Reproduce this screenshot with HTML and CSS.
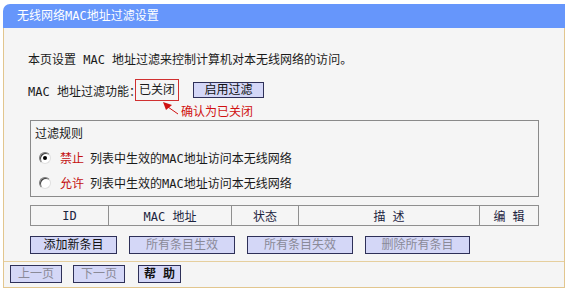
FILE: index.html
```html
<!DOCTYPE html>
<html lang="zh-CN">
<head>
    <meta charset="UTF-8">
    <title>无线网络MAC地址过滤设置</title>
    <link rel="stylesheet" href="styles.css">
</head>
<body>
    <div class="panel">
        <div class="title">无线网络MAC地址过滤设置</div>
        <div class="frame">
            <div class="content">
                <p class="intro">本页设置 MAC 地址过滤来控制计算机对本无线网络的访问。</p>

                <div class="status-row">
                    <span class="status-label">MAC 地址过滤功能：</span>
                    <span class="status-box">已关闭</span>
                    <button class="btn btn-enable">启用过滤</button>
                </div>
                <div class="note">
                    <svg class="note-arrow" width="20" height="16" viewBox="0 0 20 16">
                        <polygon points="2,1 11,4 5,9" fill="#d01010"/>
                        <line x1="7" y1="6" x2="17" y2="13" stroke="#d01010" stroke-width="1"/>
                    </svg>
                    <span>确认为已关闭</span>
                </div>

                <!-- filter rules -->
                <div class="rules">
                    <div class="rules-title">过滤规则</div>
                    <label class="rule">
                        <input type="radio" name="rule" checked>
                        <span class="red">禁止</span><span class="rule-text">列表中生效的MAC地址访问本无线网络</span>
                    </label>
                    <label class="rule">
                        <input type="radio" name="rule">
                        <span class="red">允许</span><span class="rule-text">列表中生效的MAC地址访问本无线网络</span>
                    </label>
                </div>

                <table class="list">
                    <tr>
                        <th class="c-id">ID</th>
                        <th class="c-mac">MAC 地址</th>
                        <th class="c-state">状态</th>
                        <th class="c-desc">描 述</th>
                        <th class="c-edit">编 辑</th>
                    </tr>
                </table>

                <div class="actions">
                    <button class="btn w-add">添加新条目</button>
                    <button class="btn w-all off">所有条目生效</button>
                    <button class="btn w-all off">所有条目失效</button>
                    <button class="btn w-del off">删除所有条目</button>
                </div>
            </div>

            <div class="footer">
                <button class="btn w-page off">上一页</button>
                <button class="btn w-page off">下一页</button>
                <button class="btn w-help">帮 助</button>
            </div>
        </div>
    </div>
</body>
</html>
```

FILE: styles.css
```css
body {
    margin: 0;
    padding: 4px 0 0 3px;
    background: #fff;
    font-family: "DejaVu Sans Mono", "Noto Sans CJK SC", monospace;
    font-size: 12px;
    color: #1a1a1a;
}
.panel {
    width: 562px;
}
.title {
    height: 24px;
    line-height: 24px;
    padding-left: 14px;
    background: #6696fb;
    color: #fff;
    border-radius: 7px 0 0 0;
}
.frame {
    height: 259px;
    background: #f5f5f5;
    border: 1px solid #e2c68e;
    border-top: none;
}
.content {
    padding: 22px 25px 0 26px;
}
.intro {
    margin: 0 0 0 -2px;
    line-height: 20px;
}
.status-row {
    display: flex;
    align-items: center;
    margin: 9px 0 0 -2px;
    height: 22px;
}
.status-box {
    height: 20px;
    line-height: 20px;
    padding: 0 3px;
    margin-left: -6px;
    border: 1px solid #d03030;
}
.btn {
    height: 18px;
    padding: 0;
    border: 1px solid #2e3058;
    background: #d4d7f7;
    font-family: inherit;
    font-size: 12px;
    color: #111;
    line-height: 16px;
}
.btn.off {
    color: #8a8a98;
}
.btn-enable {
    width: 71px;
    height: 16px;
    line-height: 14px;
    margin-left: 14px;
}
.note {
    display: flex;
    align-items: center;
    height: 19px;
    padding-left: 131px;
    color: #d01010;
}
.note-arrow {
    margin-top: -3px;
}
.red {
    color: #c41010;
}
.rules {
    box-sizing: border-box;
    height: 77px;
    padding-top: 3px;
    border: 1px solid #8a8a8a;
}
.rules-title {
    line-height: 21px;
    padding-left: 4px;
}
.rule {
    display: flex;
    align-items: center;
    height: 25px;
    padding-left: 8px;
}
.rule-text {
    margin-left: 6px;
}
.rule input {
    appearance: none;
    box-sizing: border-box;
    width: 12px;
    height: 12px;
    margin: 0 9px 0 0;
    border-radius: 50%;
    border: 1px solid;
    border-color: #7a7a7a #e0e0e0 #e0e0e0 #7a7a7a;
    background: #fff;
    box-shadow: inset 1px 1px 0 #404040;
    position: relative;
}
.rule input:checked::after {
    content: "";
    position: absolute;
    left: 3px;
    top: 3px;
    width: 4px;
    height: 4px;
    border-radius: 50%;
    background: #000;
}
.list {
    margin-top: 8px;
    width: 509px;
    border-collapse: collapse;
    table-layout: fixed;
}
.list th {
    height: 19px;
    padding: 0;
    border: 1px solid #8f8f8f;
    font-weight: normal;
    color: #1c2440;
    text-align: center;
}
.c-id { width: 77px; }
.c-mac { width: 122px; }
.c-state { width: 66px; }
.c-desc { width: 180px; }
.actions {
    display: flex;
    margin-top: 10px;
    gap: 12px;
}
.w-add { width: 87px; }
.w-all { width: 106px; }
.w-del { width: 105px; }
.footer {
    margin-top: 7px;
    border-top: 1px solid #e6cf9e;
    padding: 3px 0 0 6px;
    display: flex;
    gap: 11px;
}
.w-page { width: 52px; }
.w-help {
    width: 43px;
    margin-left: 2px;
    font-weight: bold;
}
```
